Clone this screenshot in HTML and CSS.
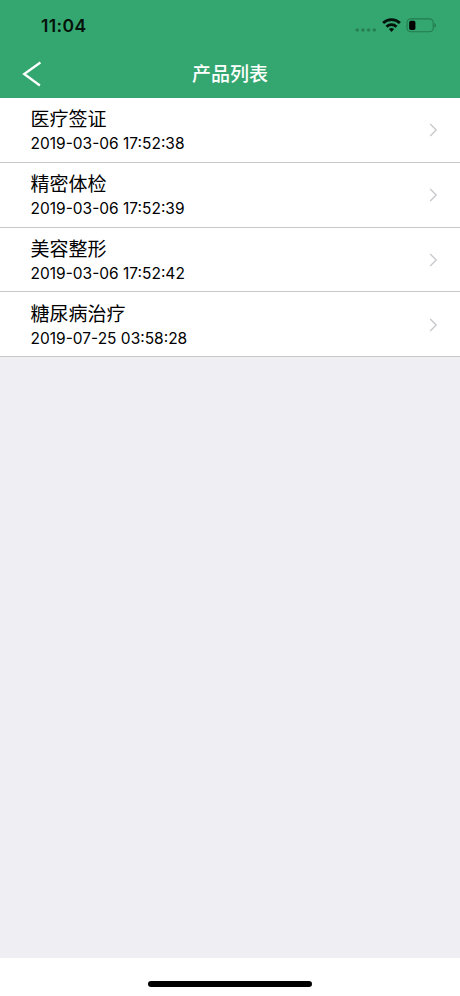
FILE: index.html
```html
<!DOCTYPE html>
<html lang="zh-CN">
<head>
<meta charset="utf-8">
<title>产品列表</title>
<link rel="stylesheet" href="styles.css">
</head>
<body>
<div class="screen">
  <header class="header">
    <div class="status">
      <span class="clock">11:04</span>
      <svg class="indicators" width="84" height="20" viewBox="0 0 84 20">
        <g fill="#278052">
          <circle cx="5.2" cy="15" r="1.8"/><circle cx="10.9" cy="15" r="1.8"/><circle cx="16.6" cy="15" r="1.8"/><circle cx="22.3" cy="15" r="1.8"/>
        </g>
        <g fill="none" stroke="#04120b" stroke-width="2.8">
          <path d="M31.1 8a12 12 0 0 1 16.8 0"/>
          <path d="M34.5 11.7a7.2 7.2 0 0 1 10 0"/>
        </g>
        <path d="M36.9 14a4 4 0 0 1 5.2 0l-2.6 2.9z" fill="#04120b"/>
        <rect x="55" y="3.9" width="26.2" height="12.8" rx="3.8" fill="none" stroke="#237b4e" stroke-width="1.1"/>
        <rect x="57.2" y="5.7" width="6.2" height="9.2" rx="1.7" fill="#000"/>
        <path d="M82.4 8v4.7q1.6-.7 1.6-2.35T82.4 8z" fill="#237b4e"/>
      </svg>
    </div>
    <nav class="nav">
      <svg class="back" width="20" height="26" viewBox="0 0 20 26"><path d="M18.4 1.5 2.2 13l15.7 11.5" fill="none" stroke="#fff" stroke-width="2.3"/></svg>
      <h1 class="title">产品列表</h1>
    </nav>
  </header>
  <main class="list">
    <div class="row">
      <div class="text"><div class="name">医疗签证</div><div class="date">2019-03-06 17:52:38</div></div>
      <svg class="chevron" width="9" height="14" viewBox="0 0 9 14"><path d="m1.2 1 6 6-6 6"/></svg>
    </div>
    <div class="row">
      <div class="text"><div class="name">精密体检</div><div class="date">2019-03-06 17:52:39</div></div>
      <svg class="chevron" width="9" height="14" viewBox="0 0 9 14"><path d="m1.2 1 6 6-6 6"/></svg>
    </div>
    <div class="row">
      <div class="text"><div class="name">美容整形</div><div class="date">2019-03-06 17:52:42</div></div>
      <svg class="chevron" width="9" height="14" viewBox="0 0 9 14"><path d="m1.2 1 6 6-6 6"/></svg>
    </div>
    <div class="row">
      <div class="text"><div class="name">糖尿病治疗</div><div class="date">2019-07-25 03:58:28</div></div>
      <svg class="chevron" width="9" height="14" viewBox="0 0 9 14"><path d="m1.2 1 6 6-6 6"/></svg>
    </div>
  </main>
  <footer class="home"><div class="bar"></div></footer>
</div>
</body>
</html>
```
FILE: styles.css
```css
* { box-sizing: border-box; }
body {
  margin: 0;
  font-family: Inter, "Noto Sans CJK SC", sans-serif;
  color: #000;
}
.screen {
  width: 460px;
  height: 996px;
  display: flex;
  flex-direction: column;
  background: #eeeef3;
  overflow: hidden;
}
.header {
  height: 98px;
  background: #34a770;
}
.status {
  height: 50px;
  display: flex;
  justify-content: space-between;
  align-items: center;
  padding: 1px 24px 0 41px;
}
.clock {
  font-size: 17.5px;
  line-height: 20px;
  font-weight: 600;
  letter-spacing: 0.4px;
  color: #04120b;
}
.indicators {
  margin-bottom: 2px;
  overflow: visible;
}
.nav {
  height: 48px;
  display: grid;
  grid-template-columns: 20px 1fr 20px;
  align-items: center;
  padding: 0 22px;
}
.title {
  margin: 0;
  padding-top: 2px;
  text-align: center;
  font-size: 19px;
  line-height: 28px;
  font-weight: 500;
  color: #fff;
}
.row {
  height: 64.8px;
  display: flex;
  align-items: center;
  justify-content: space-between;
  padding: 0 22px 0 30.5px;
  background: #fff;
  border-bottom: 1px solid #c8c8cb;
}
.row:nth-child(n+3) {
  padding-top: 1px;
}
.name {
  font-size: 19px;
  line-height: 28px;
}
.date {
  font-size: 15.5px;
  line-height: 20px;
}
.chevron {
  margin-top: 1px;
  fill: none;
  stroke: #c7c7cc;
  stroke-width: 1.3;
}
.home {
  height: 38px;
  margin-top: auto;
  padding-top: 23px;
  background: #fff;
}
.bar {
  width: 164px;
  height: 6px;
  margin: 0 auto;
  border-radius: 3px;
  background: #000;
}
```
